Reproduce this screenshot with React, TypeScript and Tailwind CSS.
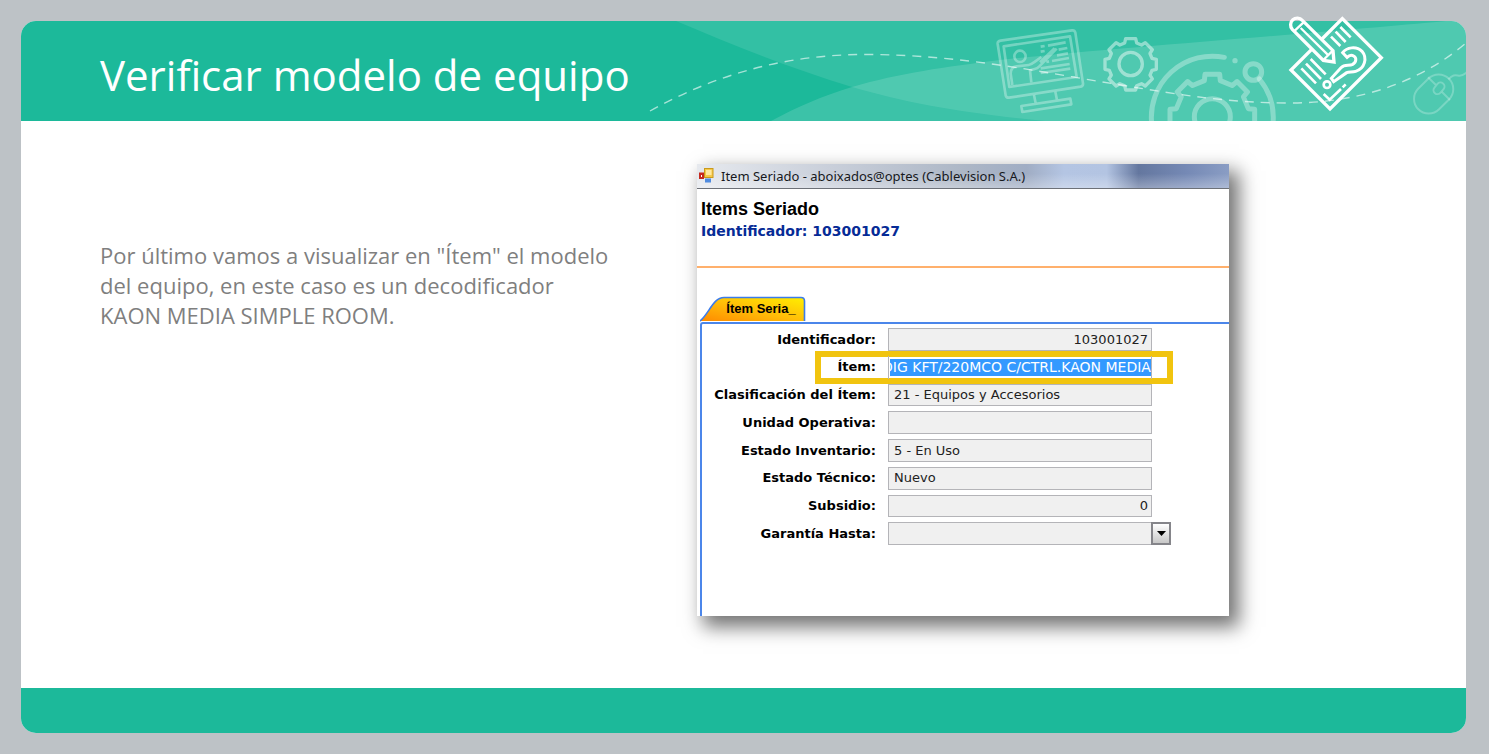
import React from "react";

type Field = { id: string; label: string; value: string; align?: "right" };

const FIELDS: Field[] = [
  { id: "identificador", label: "Identificador:", value: "103001027", align: "right" },
  { id: "item", label: "Ítem:", value: "DIG KFT/220MCO C/CTRL.KAON MEDIA" },
  { id: "clasificacion", label: "Clasificación del Ítem:", value: "21 - Equipos y Accesorios" },
  { id: "unidad", label: "Unidad Operativa:", value: "" },
  { id: "inventario", label: "Estado Inventario:", value: "5 - En Uso" },
  { id: "tecnico", label: "Estado Técnico:", value: "Nuevo" },
  { id: "subsidio", label: "Subsidio:", value: "0", align: "right" },
];

/** Closed outline of an eight-toothed gear. */
function gearPath(cx: number, cy: number, outer: number, root: number, half: number, base: number) {
  const points: string[] = [];
  for (let i = 0; i < 8; i++) {
    const a = (i * Math.PI) / 4;
    const corners = [
      [-base, -root],
      [-half, -outer],
      [half, -outer],
      [base, -root],
    ];
    for (const [x, y] of corners) {
      const px = cx + x * Math.cos(a) - y * Math.sin(a);
      const py = cy + x * Math.sin(a) + y * Math.cos(a);
      points.push(`${px.toFixed(1)} ${py.toFixed(1)}`);
    }
  }
  return `M${points.join("L")}Z`;
}

function HeaderArt() {
  return (
    <svg
      aria-hidden="true"
      className="absolute top-0 right-0 h-[100px] w-[820px]"
      viewBox="646 21 820 100"
      fill="none"
    >
      <path d="M676 21C735 46 790 68 852 87C910 104 970 114 1045 121H1466V21Z" fill="#fff" fillOpacity=".1" />
      <path d="M771 121C797 107 822 96 852 87C900 73 945 67 1000 60C1110 48 1320 33 1446 21H1466V121Z" fill="#fff" fillOpacity=".14" />
      <g transform="translate(980 15) scale(.33333)" stroke="#fff" strokeOpacity=".32" strokeWidth="8" strokeLinejoin="round">
        <path d="M62 77L276 46Q284 45 286 53L309 205Q310 213 302 215L87 248Q79 249 77 241L53 87Q52 79 62 77Z" />
        <path d="M71 94L270 64L290 186L88 216Z" />
        <circle cx="120" cy="124" r="17" />
        <path d="M97 210L92 176Q92 156 110 154L146 150Q154 149 162 142L184 126M154 202L150 166L164 162Q172 160 178 154L230 101M180 142L224 100" />
        <path d="M182 95L194 93M204 92L257 82M182 110L194 108M236 104L262 99M231 121L264 115M199 141L207 139M216 138L267 129M182 160L269 147M182 174L271 161" />
        <path d="M162 240L167 265M226 230L231 255M124 273L271 251L274 268L127 291Z" />
      </g>
      <g transform="translate(980 15) scale(.33333)" stroke="#fff" strokeOpacity=".45" strokeWidth="10" strokeLinejoin="round">
        <path d={gearPath(452, 148, 77, 64, 15, 18)} />
        <circle cx="452" cy="147" r="35" />
      </g>
      <g transform="translate(1130 15) scale(.33333)" stroke="#fff" strokeOpacity=".32" strokeWidth="15" strokeLinejoin="round" strokeLinecap="round">
        <path d={gearPath(247, 305, 127, 108, 22, 24)} />
        <circle cx="247" cy="305" r="54" />
        <path d="M65 325A183 183 0 0 1 283 127M388 192A183 183 0 0 1 429 325" />
        <circle cx="370" cy="171" r="25" />
        <circle cx="315" cy="137" r="8" fill="#fff" fillOpacity=".32" stroke="none" />
      </g>
      <g transform="translate(1270 5) scale(.33333)" stroke="#fff" strokeOpacity=".24" strokeWidth="6">
        <rect x="447" y="202" width="88" height="130" rx="44" transform="rotate(45 491 267)" />
        <path d="M474 217L497 239M516 261L540 285" />
        <rect x="495" y="231" width="24" height="38" rx="12" transform="rotate(40 507 250)" />
        <path d="M535 223C550 207 557 211 567 212C579 213 584 207 590 202" />
      </g>
      <path
        d="M650 111C720 72 790 54.500 865 54.500C960 54.500 1040 72 1115 84C1180 95 1230 103 1290 103C1360 103 1420 82 1466 43"
        stroke="#fff"
        strokeOpacity=".6"
        strokeWidth="1.400"
        strokeDasharray="9 7"
      />
    </svg>
  );
}

function QuizIcon() {
  return (
    <svg
      aria-hidden="true"
      className="absolute -top-[7px] right-[80px] h-[100px] w-[100px]"
      viewBox="48 27 300 300"
      fill="none"
      stroke="#fff"
    >
      <path d="M128 130L63 195L180 312L334 158L217 41L153 105" strokeWidth="10" />
      <path d="M97 46L189 137L192 171L160 166L67 73A19 19 0 0 1 97 46Z" strokeWidth="10" />
      <path d="M72 79L103 50M92 69L176 152M160 165L189 136" strokeWidth="7" />
      <path d="M183 95L211 123M197 80L227 111M211 66L242 97" strokeWidth="8" />
      <path d="M94 190L138 235M108 176L153 222M122 162L167 208" strokeWidth="8" />
      <path d="M218 143C230 127 259 122 276 139C293 159 284 191 257 199C247 202 237 200 230 203L191 230L184 220L213 188C224 176 237 184 248 178C260 171 260 158 251 153C245 149 237 151 231 157Z" strokeWidth="9" />
      <circle cx="171" cy="239" r="10" strokeWidth="8" />
      <path d="M161 267L179 284L213 252M218 247L227 238" strokeWidth="8" />
    </svg>
  );
}

function AppIcon() {
  return (
    <svg aria-hidden="true" className="h-4 w-4 shrink-0" viewBox="0 0 16 16">
      <rect x="6.500" y=".500" width="8.500" height="9" fill="#f7c948" stroke="#c99a1c" />
      <rect x="8" y="2" width="5.500" height="5" fill="#ffe9a0" />
      <rect x="1" y="4.500" width="5" height="6.500" fill="#c62a1e" />
      <rect x="3" y="7" width="1" height="2" fill="#fff" />
      <rect x="7" y="10.500" width="6" height="4" fill="#4f8be0" />
    </svg>
  );
}

function FormWindow() {
  return (
    <section className="flex h-[452px] w-full max-w-[532px] flex-col bg-white shadow-[8px_9px_18px_2px_rgba(0,0,0,0.55)]">
      <div className="flex h-[25px] shrink-0 items-center gap-[7px] border-b border-[#6d7178] bg-[linear-gradient(180deg,rgba(255,255,255,0)_40%,rgba(255,255,255,0.3)_100%),linear-gradient(90deg,#e6e9ee_0%,#c9cfda_25%,#adb7c6_50%,#a0adc4_62%,#b4c5e3_69%,#b3c4e2_77%,#64779f_83%,#7589b5_92%,#8a9dc4_100%)] pl-px font-['Noto_Sans',sans-serif] text-[13px] leading-6 text-[#16181c]">
        <AppIcon />
        <span className="whitespace-nowrap">Item Seriado - aboixados@optes (Cablevision S.A.)</span>
      </div>
      <div className="h-[79px] shrink-0 border-b-2 border-[#ffb06c] pt-[9px] pl-1">
        <h2 className="font-['Liberation_Sans',sans-serif] text-[18px] leading-[22px] font-bold text-black">Items Seriado</h2>
        <p className="font-['DejaVu_Sans',sans-serif] text-[14px] leading-[22px] font-bold text-[#062b96]">
          Identificador: 103001027
        </p>
      </div>
      <div className="mt-7 ml-[3px] flex h-[26px] shrink-0">
        <button
          type="button"
          className="relative h-[26px] w-[106px] pl-4 text-center font-['Liberation_Sans',sans-serif] text-[13px] leading-[26px] font-bold text-black"
        >
          <svg aria-hidden="true" className="absolute inset-0 h-full w-full" viewBox="0 0 106 26" fill="none">
            <defs>
              <linearGradient id="tab" x1="0" y1="1" x2="1" y2="0">
                <stop offset="0" stopColor="#ff8a00" />
                <stop offset=".5" stopColor="#ffbf08" />
                <stop offset="1" stopColor="#ffef00" />
              </linearGradient>
            </defs>
            <path d="M0 25C9 18 13 1.500 24 1.500H101Q104.500 1.500 104.500 5V25Z" fill="url(#tab)" />
            <path d="M0 25C9 18 13 1.500 24 1.500H101Q104.500 1.500 104.500 5V25" stroke="#3b7ceb" strokeWidth="1.600" />
          </svg>
          <span className="relative">Ítem Seria_</span>
        </button>
      </div>
      <form
        className="ml-[3px] flex-1 rounded-tl-[3px] border-t-2 border-l-2 border-[#4b86ea] pt-1"
        onSubmit={(e) => e.preventDefault()}
      >
        <div className="grid h-[217px] grid-rows-8 gap-[5px] font-['DejaVu_Sans',sans-serif] text-[13px]">
          {FIELDS.map((f) => (
            <div key={f.id} className="relative flex items-stretch gap-3">
              {f.id === "item" && (
                <div className="absolute -top-[5px] left-[113px] h-[33px] w-[358px] border-[6px] border-[#f1c40f] bg-white" />
              )}
              <label htmlFor={f.id} className="relative flex w-[174px] items-center justify-end font-bold whitespace-nowrap text-black">
                {f.label}
              </label>
              {f.id === "item" ? (
                <div className="relative flex w-[264px] items-center border-x border-[#b4b4b8] pl-px">
                  <input
                    id={f.id}
                    readOnly
                    defaultValue={f.value}
                    className="h-[17px] w-full bg-[#3399ff] -indent-2 text-[14px] text-white outline-none"
                  />
                </div>
              ) : (
                <input
                  id={f.id}
                  readOnly
                  defaultValue={f.value}
                  className={
                    "w-[264px] border border-[#b4b4b8] bg-[#f0f0f0] pr-[3px] pl-[5px] text-[#222] outline-none " +
                    (f.align === "right" ? "text-right" : "text-left")
                  }
                />
              )}
            </div>
          ))}
          <div className="flex items-stretch gap-3">
            <label htmlFor="garantia" className="flex w-[174px] items-center justify-end font-bold whitespace-nowrap text-black">
              Garantía Hasta:
            </label>
            <div className="relative flex w-[283px]">
              <select id="garantia" className="w-full appearance-none border border-[#b4b4b8] bg-[#f0f0f0] outline-none">
                <option value="" />
              </select>
              <span className="pointer-events-none absolute top-0 right-0 flex h-full w-5 items-center justify-center border-2 border-[#85858a] bg-linear-to-b from-white to-[#c8c8c8]">
                <svg aria-hidden="true" className="h-[5px] w-[9px]" viewBox="0 0 9 5">
                  <path d="M0 0H9L4.500 5Z" fill="#000" />
                </svg>
              </span>
            </div>
          </div>
        </div>
      </form>
    </section>
  );
}

export default function App() {
  return (
    <div className="flex min-h-screen flex-col bg-[#bdc2c6] py-[21px] pr-[23px] pl-[21px]">
      <div className="flex flex-1 flex-col rounded-[15px] bg-white">
        <header className="relative flex h-[100px] items-center">
          <div className="absolute inset-0 overflow-hidden rounded-t-[15px] bg-[#1cb99a]">
            <HeaderArt />
          </div>
          <QuizIcon />
          <h1 className="relative pt-2 pl-[79px] font-['Open_Sans',sans-serif] text-[42px] leading-[56px] whitespace-nowrap text-white">
            Verificar modelo de equipo
          </h1>
        </header>
        <main className="flex flex-1 items-start pt-[43px] pb-[72px]">
          <div className="w-[676px] pt-[76px] pl-[79px]">
            <p className="max-w-[540px] font-['Open_Sans',sans-serif] text-[22px] leading-[30px] text-[#7f7f7f]">
              Por último vamos a visualizar en "Ítem" el modelo
              <br />
              del equipo, en este caso es un decodificador
              <br />
              KAON MEDIA SIMPLE ROOM.
            </p>
          </div>
          <FormWindow />
        </main>
        <footer className="h-[45px] rounded-b-[15px] bg-[#1cb99a]" />
      </div>
    </div>
  );
}
